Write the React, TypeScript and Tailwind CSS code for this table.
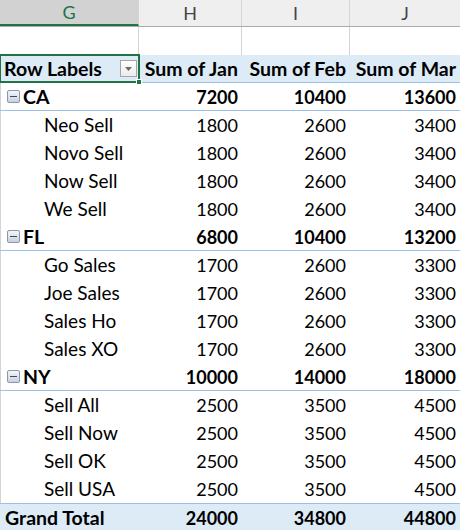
import React from "react";

type Row = { label: string; jan: number; feb: number; mar: number; group?: boolean };

const rows: Row[] = [
  { label: "CA", jan: 7200, feb: 10400, mar: 13600, group: true },
  { label: "Neo Sell", jan: 1800, feb: 2600, mar: 3400 },
  { label: "Novo Sell", jan: 1800, feb: 2600, mar: 3400 },
  { label: "Now Sell", jan: 1800, feb: 2600, mar: 3400 },
  { label: "We Sell", jan: 1800, feb: 2600, mar: 3400 },
  { label: "FL", jan: 6800, feb: 10400, mar: 13200, group: true },
  { label: "Go Sales", jan: 1700, feb: 2600, mar: 3300 },
  { label: "Joe Sales", jan: 1700, feb: 2600, mar: 3300 },
  { label: "Sales Ho", jan: 1700, feb: 2600, mar: 3300 },
  { label: "Sales XO", jan: 1700, feb: 2600, mar: 3300 },
  { label: "NY", jan: 10000, feb: 14000, mar: 18000, group: true },
  { label: "Sell All", jan: 2500, feb: 3500, mar: 4500 },
  { label: "Sell Now", jan: 2500, feb: 3500, mar: 4500 },
  { label: "Sell OK", jan: 2500, feb: 3500, mar: 4500 },
  { label: "Sell USA", jan: 2500, feb: 3500, mar: 4500 },
];

const font = { fontFamily: "Lato, 'Open Sans', sans-serif" };

const Collapse = () => (
  <span className="w-[13px] h-[13px] mr-[3px] border border-[#8a97ad] rounded-[2px] bg-gradient-to-b from-[#f4f6f9] to-[#c9d1dd] flex items-center justify-center">
    <span className="w-[7px] h-[1.5px] bg-[#3d4c66]" />
  </span>
);

const Dropdown = () => (
  <span className="w-[17px] h-[17px] border border-[#a6a6a6] bg-gradient-to-b from-white to-[#ececec] flex items-center justify-center">
    <svg width="7" height="4" viewBox="0 0 7 4">
      <path d="M0 0 L7 0 L3.5 4 Z" fill="#6b6b6b" />
    </svg>
  </span>
);

export default function App() {
  const num = "flex items-center justify-end pr-[4px] pt-[1px] text-[18px]";
  return (
    <div className="w-[460px] h-[530px] overflow-hidden bg-white text-black text-[19px]" style={font}>
      {/* column letters */}
      <div className="flex h-[27px] bg-[#efefef] border-b border-[#ababab] text-[18px] text-[#444]">
        <div className="w-[139px] flex items-center justify-center bg-[#d2d2d2] border-b-2 border-[#217346] text-[#217346] border-r border-r-[#d4d4d4]">G</div>
        <div className="w-[103px] flex items-center justify-center border-r border-[#d4d4d4]">H</div>
        <div className="w-[108px] flex items-center justify-center border-r border-[#d4d4d4]">I</div>
        <div className="w-[110px] flex items-center justify-center">J</div>
      </div>
      {/* empty row 1 */}
      <div className="flex h-[28px]">
        <div className="w-[139px] border-r border-[#d4d4d4]" />
        <div className="w-[103px] border-r border-[#d4d4d4]" />
        <div className="w-[108px] border-r border-[#d4d4d4]" />
        <div className="w-[110px]" />
      </div>
      {/* pivot header */}
      <div className="flex h-[28px] bg-[#ddebf7] font-bold text-[19.5px] border-b border-[#9bc2e6]">
        <div className="w-[139px] relative flex items-center justify-between pl-[4px] pr-[2px] outline-2 outline-[#217346] -outline-offset-1">
          <span className="pt-[1px]">Row Labels</span>
          <Dropdown />
          <span className="absolute right-[-3px] bottom-[-3px] w-[6px] h-[6px] bg-[#217346] border border-white" />
        </div>
        <div className="w-[103px] flex items-center justify-end pr-[4px] pt-[1px] whitespace-nowrap">Sum of Jan</div>
        <div className="w-[108px] flex items-center justify-end pr-[4px] pt-[1px] whitespace-nowrap">Sum of Feb</div>
        <div className="w-[110px] flex items-center justify-end pr-[4px] pt-[1px] whitespace-nowrap">Sum of Mar</div>
      </div>
      {rows.map((r) => (
        <div
          key={r.label}
          className={`flex h-[28px] ${r.group ? "font-bold border-b border-[#9bc2e6]" : ""}`}
        >
          <div className={`w-[139px] flex items-center border-l border-[#d4d4d4] ${r.group ? "pl-[6px]" : "pl-[43px]"}`}>
            {r.group && <Collapse />}
            <span className={`pt-[1px] ${r.group ? "text-[19.5px]" : ""}`}>{r.label}</span>
          </div>
          <div className={`w-[103px] ${num}`}>{r.jan}</div>
          <div className={`w-[108px] ${num}`}>{r.feb}</div>
          <div className={`w-[110px] ${num}`}>{r.mar}</div>
        </div>
      ))}
      <div className="flex h-[28px] bg-[#ddebf7] font-bold border-t border-[#9bc2e6]">
        <div className="w-[139px] flex items-center pl-[5px] pt-[1px] text-[19.5px]">Grand Total</div>
        <div className={`w-[103px] ${num}`}>24000</div>
        <div className={`w-[108px] ${num}`}>34800</div>
        <div className={`w-[110px] ${num}`}>44800</div>
      </div>
    </div>
  );
}
